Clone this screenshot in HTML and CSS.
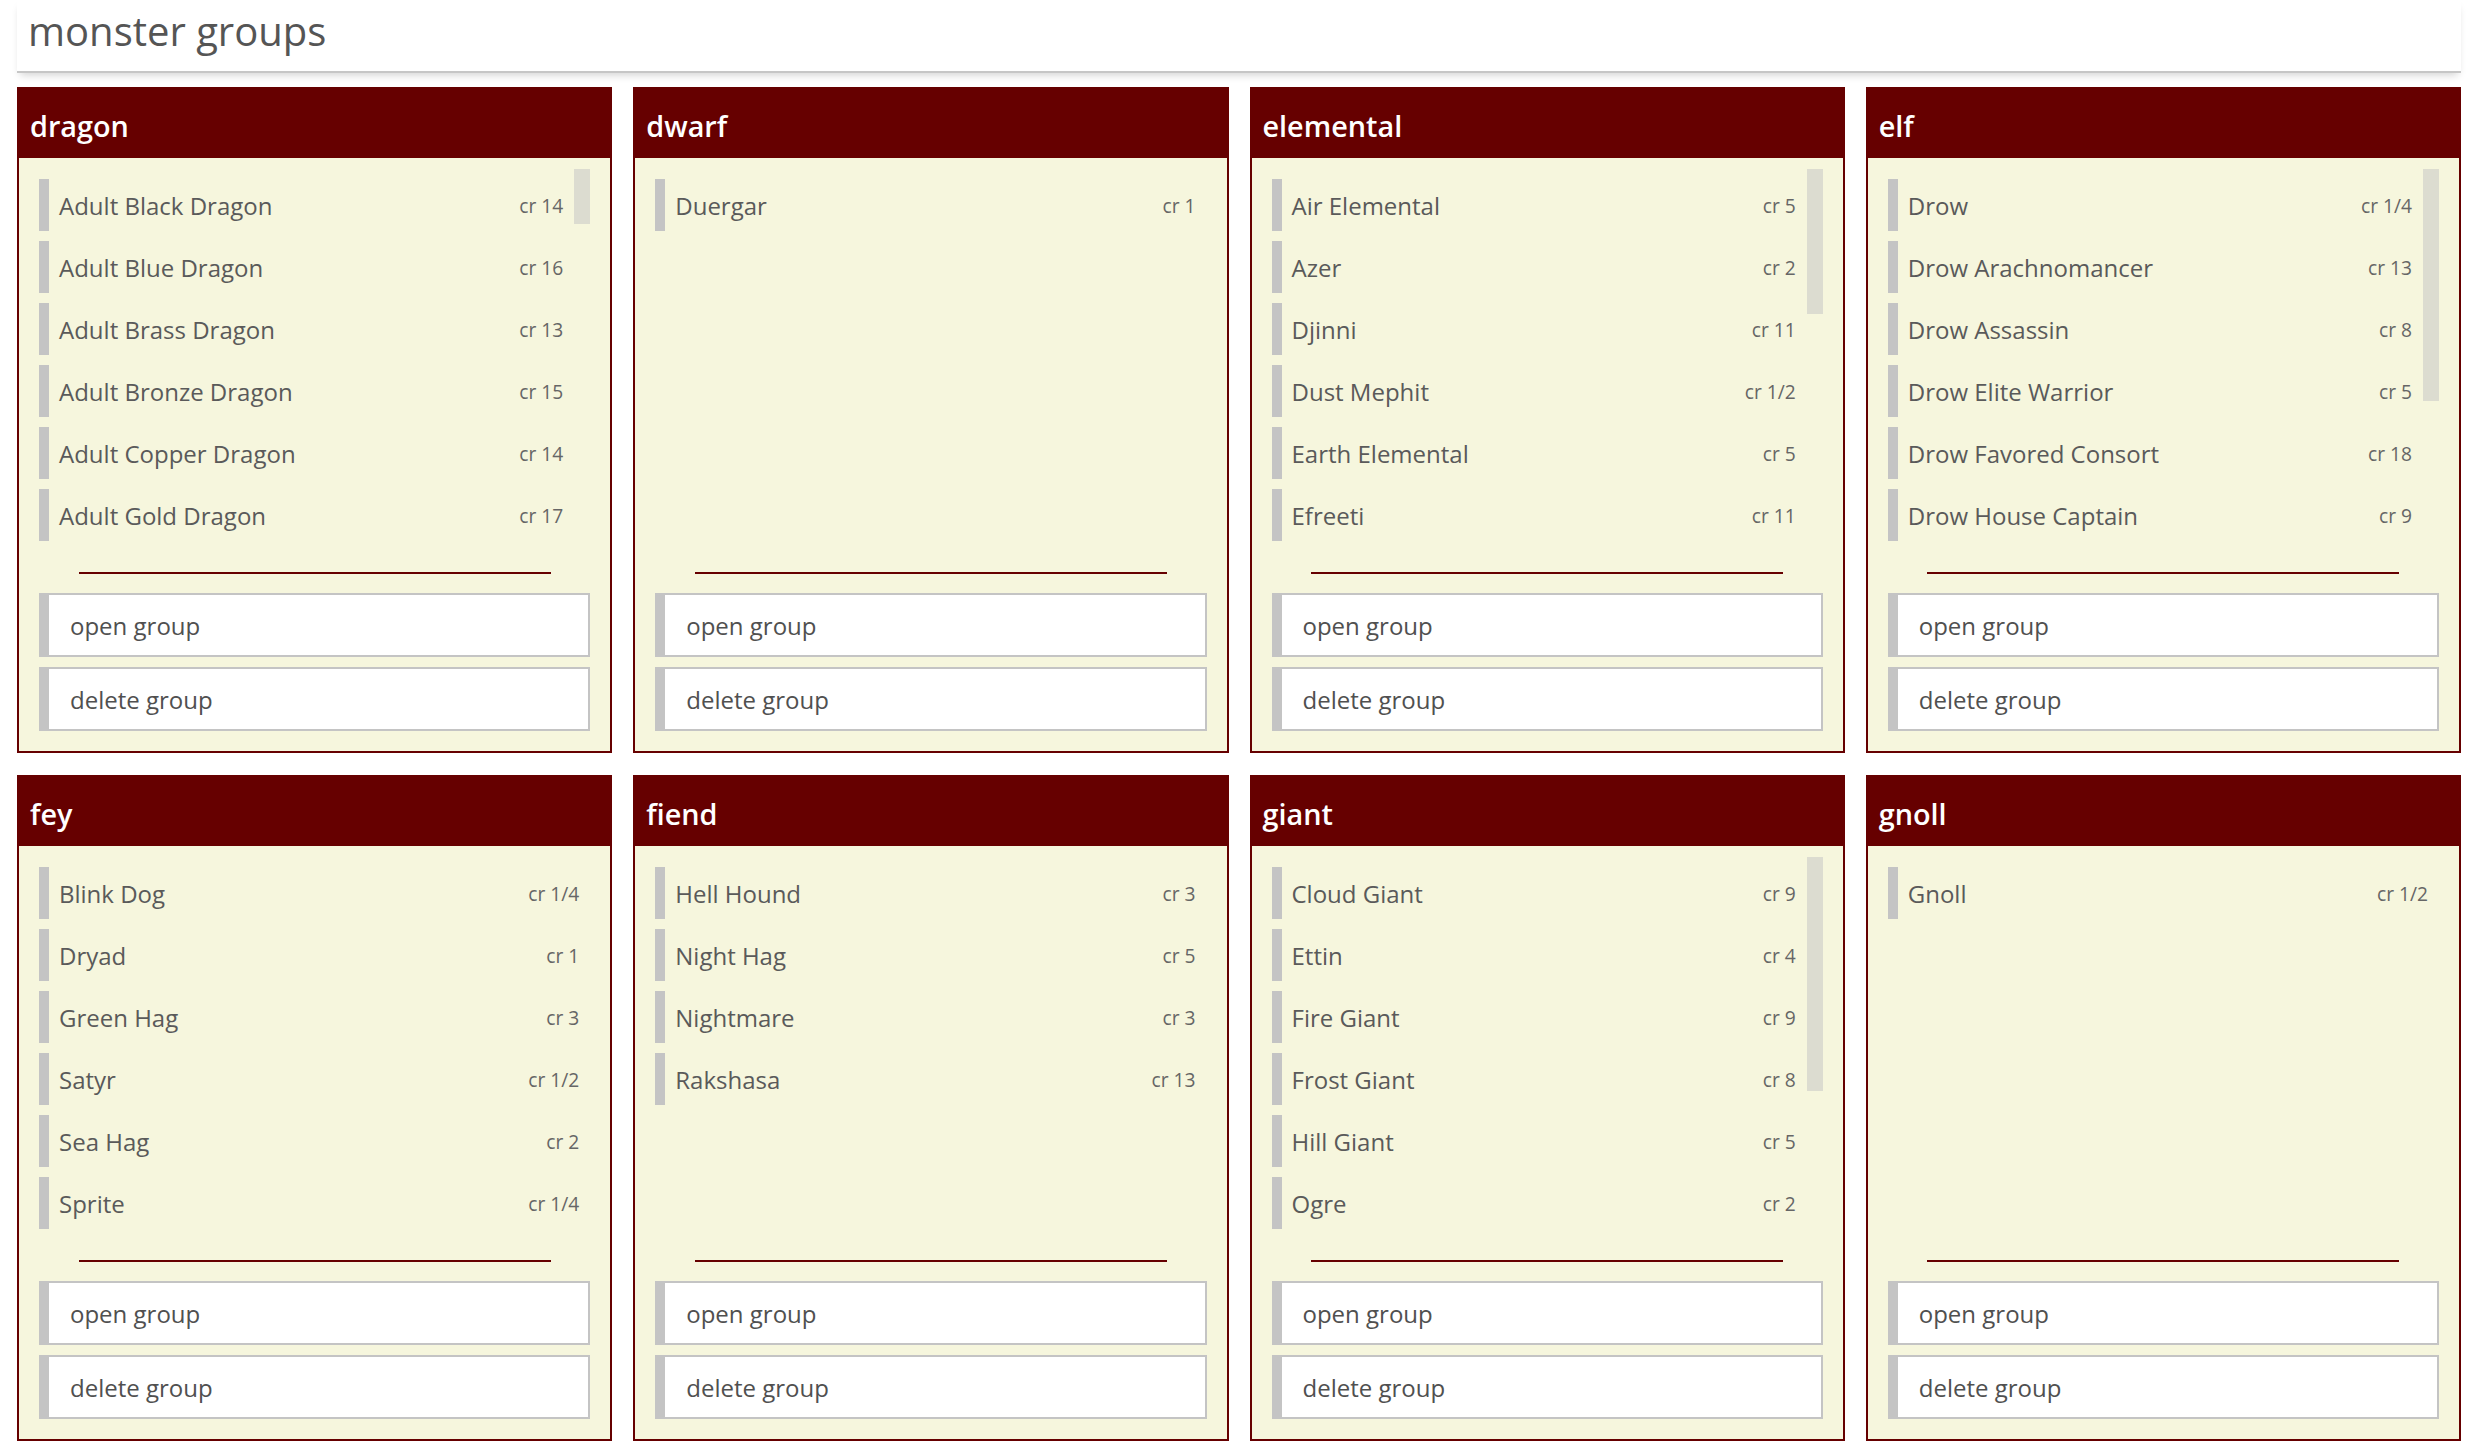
FILE: index.html
```html
<!DOCTYPE html>
<html lang="en">
<head>
<meta charset="utf-8">
<title>monster groups</title>
<link rel="stylesheet" href="styles.css">
</head>
<body>
<div class="page">
  <div class="title-bar"><h1 class="title">monster groups</h1></div>
  <div class="grid">

    <section class="card">
      <header class="card-head">dragon</header>
      <div class="card-body">
        <div class="list-wrap">
          <div class="list">
            <div class="item"><span class="name">Adult Black Dragon</span><span class="cr">cr 14</span></div>
            <div class="item"><span class="name">Adult Blue Dragon</span><span class="cr">cr 16</span></div>
            <div class="item"><span class="name">Adult Brass Dragon</span><span class="cr">cr 13</span></div>
            <div class="item"><span class="name">Adult Bronze Dragon</span><span class="cr">cr 15</span></div>
            <div class="item"><span class="name">Adult Copper Dragon</span><span class="cr">cr 14</span></div>
            <div class="item"><span class="name">Adult Gold Dragon</span><span class="cr">cr 17</span></div>
          </div>
          <div class="track"><div class="thumb" style="height:55px"></div></div>
        </div>
        <hr class="divider">
        <button class="btn">open group</button>
        <button class="btn">delete group</button>
      </div>
    </section>

    <section class="card">
      <header class="card-head">dwarf</header>
      <div class="card-body">
        <div class="list-wrap">
          <div class="list">
            <div class="item"><span class="name">Duergar</span><span class="cr">cr 1</span></div>
          </div>
        </div>
        <hr class="divider">
        <button class="btn">open group</button>
        <button class="btn">delete group</button>
      </div>
    </section>

    <section class="card">
      <header class="card-head">elemental</header>
      <div class="card-body">
        <div class="list-wrap">
          <div class="list">
            <div class="item"><span class="name">Air Elemental</span><span class="cr">cr 5</span></div>
            <div class="item"><span class="name">Azer</span><span class="cr">cr 2</span></div>
            <div class="item"><span class="name">Djinni</span><span class="cr">cr 11</span></div>
            <div class="item"><span class="name">Dust Mephit</span><span class="cr">cr 1/2</span></div>
            <div class="item"><span class="name">Earth Elemental</span><span class="cr">cr 5</span></div>
            <div class="item"><span class="name">Efreeti</span><span class="cr">cr 11</span></div>
          </div>
          <div class="track"><div class="thumb" style="height:145px"></div></div>
        </div>
        <hr class="divider">
        <button class="btn">open group</button>
        <button class="btn">delete group</button>
      </div>
    </section>

    <section class="card">
      <header class="card-head">elf</header>
      <div class="card-body">
        <div class="list-wrap">
          <div class="list">
            <div class="item"><span class="name">Drow</span><span class="cr">cr 1/4</span></div>
            <div class="item"><span class="name">Drow Arachnomancer</span><span class="cr">cr 13</span></div>
            <div class="item"><span class="name">Drow Assassin</span><span class="cr">cr 8</span></div>
            <div class="item"><span class="name">Drow Elite Warrior</span><span class="cr">cr 5</span></div>
            <div class="item"><span class="name">Drow Favored Consort</span><span class="cr">cr 18</span></div>
            <div class="item"><span class="name">Drow House Captain</span><span class="cr">cr 9</span></div>
          </div>
          <div class="track"><div class="thumb" style="height:232px"></div></div>
        </div>
        <hr class="divider">
        <button class="btn">open group</button>
        <button class="btn">delete group</button>
      </div>
    </section>

    <section class="card">
      <header class="card-head">fey</header>
      <div class="card-body">
        <div class="list-wrap">
          <div class="list">
            <div class="item"><span class="name">Blink Dog</span><span class="cr">cr 1/4</span></div>
            <div class="item"><span class="name">Dryad</span><span class="cr">cr 1</span></div>
            <div class="item"><span class="name">Green Hag</span><span class="cr">cr 3</span></div>
            <div class="item"><span class="name">Satyr</span><span class="cr">cr 1/2</span></div>
            <div class="item"><span class="name">Sea Hag</span><span class="cr">cr 2</span></div>
            <div class="item"><span class="name">Sprite</span><span class="cr">cr 1/4</span></div>
          </div>
        </div>
        <hr class="divider">
        <button class="btn">open group</button>
        <button class="btn">delete group</button>
      </div>
    </section>

    <section class="card">
      <header class="card-head">fiend</header>
      <div class="card-body">
        <div class="list-wrap">
          <div class="list">
            <div class="item"><span class="name">Hell Hound</span><span class="cr">cr 3</span></div>
            <div class="item"><span class="name">Night Hag</span><span class="cr">cr 5</span></div>
            <div class="item"><span class="name">Nightmare</span><span class="cr">cr 3</span></div>
            <div class="item"><span class="name">Rakshasa</span><span class="cr">cr 13</span></div>
          </div>
        </div>
        <hr class="divider">
        <button class="btn">open group</button>
        <button class="btn">delete group</button>
      </div>
    </section>

    <section class="card">
      <header class="card-head">giant</header>
      <div class="card-body">
        <div class="list-wrap">
          <div class="list">
            <div class="item"><span class="name">Cloud Giant</span><span class="cr">cr 9</span></div>
            <div class="item"><span class="name">Ettin</span><span class="cr">cr 4</span></div>
            <div class="item"><span class="name">Fire Giant</span><span class="cr">cr 9</span></div>
            <div class="item"><span class="name">Frost Giant</span><span class="cr">cr 8</span></div>
            <div class="item"><span class="name">Hill Giant</span><span class="cr">cr 5</span></div>
            <div class="item"><span class="name">Ogre</span><span class="cr">cr 2</span></div>
          </div>
          <div class="track"><div class="thumb" style="height:234px"></div></div>
        </div>
        <hr class="divider">
        <button class="btn">open group</button>
        <button class="btn">delete group</button>
      </div>
    </section>

    <section class="card">
      <header class="card-head">gnoll</header>
      <div class="card-body">
        <div class="list-wrap">
          <div class="list">
            <div class="item"><span class="name">Gnoll</span><span class="cr">cr 1/2</span></div>
          </div>
        </div>
        <hr class="divider">
        <button class="btn">open group</button>
        <button class="btn">delete group</button>
      </div>
    </section>

  </div>
</div>
</body>
</html>
```

FILE: styles.css
```css
* { box-sizing: border-box; }

html, body {
  margin: 0;
  padding: 0;
  background: #ffffff;
}

body {
  font-family: "Open Sans", "Noto Sans", "Liberation Sans", sans-serif;
  color: #555555;
}

.page {
  padding: 0 17px;
}

.title-bar {
  padding: 2px 0 12px 11px;
  border-bottom: 2px solid #c6c6c6;
  box-shadow: 0 5px 8px -3px rgba(0, 0, 0, 0.18);
}

.title {
  margin: 0;
  font-size: 40px;
  font-weight: 400;
  line-height: 57px;
  color: #555555;
}

.grid {
  margin-top: 14px;
  display: grid;
  grid-template-columns: repeat(4, 1fr);
  column-gap: 21px;
  row-gap: 22px;
}

.card {
  border: 2px solid #660000;
  background: #f6f6dd;
  display: flex;
  flex-direction: column;
}

.card-head {
  height: 69px;
  background: #660000;
  color: #ffffff;
  font-size: 28.8px;
  font-weight: 600;
  padding: 4px 11px 0;
  display: flex;
  align-items: center;
}

.card-body {
  padding: 11px 20px 20px;
  display: flex;
  flex-direction: column;
}

.list-wrap {
  height: 382px;
  display: flex;
}

.list {
  flex: 1 1 auto;
  min-width: 0;
  padding-top: 10px;
  display: flex;
  flex-direction: column;
  gap: 10px;
}

.track {
  flex: 0 0 16px;
  width: 16px;
}

.thumb {
  width: 16px;
  background: #dcdcd0;
}

.item {
  flex: 0 0 52px;
  height: 52px;
  border-left: 10px solid #c4c4c4;
  padding: 0 11px 0 10px;
  display: flex;
  align-items: center;
  justify-content: space-between;
}

.name {
  font-size: 24px;
  color: #5a5a5a;
}

.cr {
  font-size: 19.2px;
  color: #666666;
}

.divider {
  width: 472px;
  max-width: 100%;
  margin: 21px auto 19px;
  border: 0;
  height: 2px;
  background: #660000;
}

.btn {
  display: block;
  width: 100%;
  height: 64px;
  margin: 0;
  background: #ffffff;
  border: 2px solid #c4c4c4;
  border-left: 10px solid #c4c4c4;
  padding: 0 0 0 21px;
  text-align: left;
  font-family: "Open Sans", "Noto Sans", "Liberation Sans", sans-serif;
  font-size: 24px;
  color: #505050;
}

.btn + .btn {
  margin-top: 10px;
}
```
